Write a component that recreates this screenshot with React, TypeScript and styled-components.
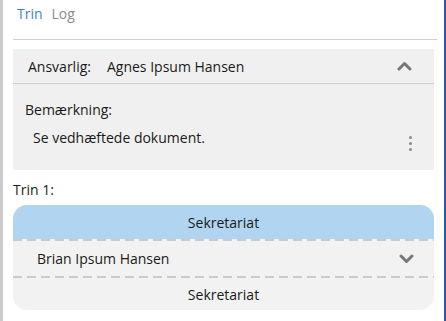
import { ReactElement } from 'react';
import styled, { createGlobalStyle } from 'styled-components';

const GlobalStyle = createGlobalStyle`
  html, body {
    margin: 0;
    padding: 0;
    background: #ffffff;
  }
  body {
    font-family: 'Open Sans', 'Noto Sans', sans-serif;
    font-size: 14px;
    color: #1a1a1a;
  }
  * {
    box-sizing: border-box;
  }
`;

const Frame = styled.div`
  display: flex;
  flex-direction: column;
  width: 446px;
  height: 321px;
  overflow: hidden;
  border-left: 3px solid #cacaca;
  border-right: 2px solid #2b5a9e;
  padding: 0 10px 0 10px;
`;

const TabBar = styled.div`
  display: flex;
  align-items: flex-start;
  gap: 9px;
  height: 40px;
  padding: 4px 0 0 4px;
  margin-right: -3px;
  border-bottom: 1px solid #cfcfcf;
`;

const Tab = styled.span<{ $active?: boolean }>`
  color: ${({ $active }) => ($active ? '#3f7fd8' : '#8a8a8a')};
  font-size: 14px;
`;

const Panel = styled.section`
  display: flex;
  flex-direction: column;
  margin-top: 9px;
  width: 421px;
  background: #f0f0f0;
`;

const PanelHeader = styled.div`
  display: flex;
  align-items: center;
  height: 35px;
  padding: 0 22px 0 15px;
  border-bottom: 1px solid #cfcfcf;
`;

const Label = styled.span`
  margin-right: 16px;
`;

const Grow = styled.span`
  flex: 1;
`;

const PanelBody = styled.div`
  display: flex;
  flex-direction: column;
  padding: 16px 22px 16px 12px;
  height: 86px;
`;

const NoteRow = styled.div`
  display: flex;
  align-items: flex-start;
  margin-top: 9px;
  padding-left: 8px;
`;

const Kebab = styled.div`
  display: flex;
  flex-direction: column;
  gap: 3px;
  margin-top: 8px;
  span {
    width: 3px;
    height: 3px;
    border-radius: 50%;
    background: #8a8a8a;
  }
`;

const StepTitle = styled.div`
  margin-top: 10px;
  height: 25px;
`;

const StepCard = styled.div`
  display: flex;
  flex-direction: column;
  width: 421px;
  border-radius: 14px;
  overflow: hidden;
  background: #f2f2f2;
`;

const Divider = styled.div`
  height: 2px;
  background: repeating-linear-gradient(to right, #cbcbcb 0 9px, transparent 9px 14px);
`;

const StepHeader = styled.div`
  display: flex;
  align-items: center;
  justify-content: center;
  height: 34px;
  background: #b1d5f0;
`;

const StepRow = styled.div`
  display: flex;
  align-items: center;
  height: 35px;
  padding: 0 20px 0 24px;
`;

const StepFooter = styled.div`
  display: flex;
  align-items: center;
  justify-content: center;
  height: 32px;
`;

function Chevron({ up }: { up?: boolean }): ReactElement {
  return (
    <svg width="15" height="10" viewBox="0 0 15 10">
      <polyline
        points={up ? '2,8 7.5,2.5 13,8' : '2,2 7.5,7.5 13,2'}
        fill="none"
        stroke="#777777"
        strokeWidth="3"
        strokeLinecap="round"
        strokeLinejoin="round"
      />
    </svg>
  );
}

function App(): ReactElement {
  return (
    <>
      <GlobalStyle />
      <Frame>
        <TabBar>
          <Tab $active>Trin</Tab>
          <Tab>Log</Tab>
        </TabBar>

        <Panel>
          <PanelHeader>
            <Label>Ansvarlig:</Label>
            <Grow>Agnes Ipsum Hansen</Grow>
            <Chevron up />
          </PanelHeader>
          <PanelBody>
            <span>Bemærkning:</span>
            <NoteRow>
              <Grow>Se vedhæftede dokument.</Grow>
              <Kebab>
                <span />
                <span />
                <span />
              </Kebab>
            </NoteRow>
          </PanelBody>
        </Panel>

        <StepTitle>Trin 1:</StepTitle>
        <StepCard>
          <StepHeader>Sekretariat</StepHeader>
          <Divider />
          <StepRow>
            <Grow>Brian Ipsum Hansen</Grow>
            <Chevron />
          </StepRow>
          <Divider />
          <StepFooter>Sekretariat</StepFooter>
        </StepCard>
      </Frame>
    </>
  );
}

export default App;
